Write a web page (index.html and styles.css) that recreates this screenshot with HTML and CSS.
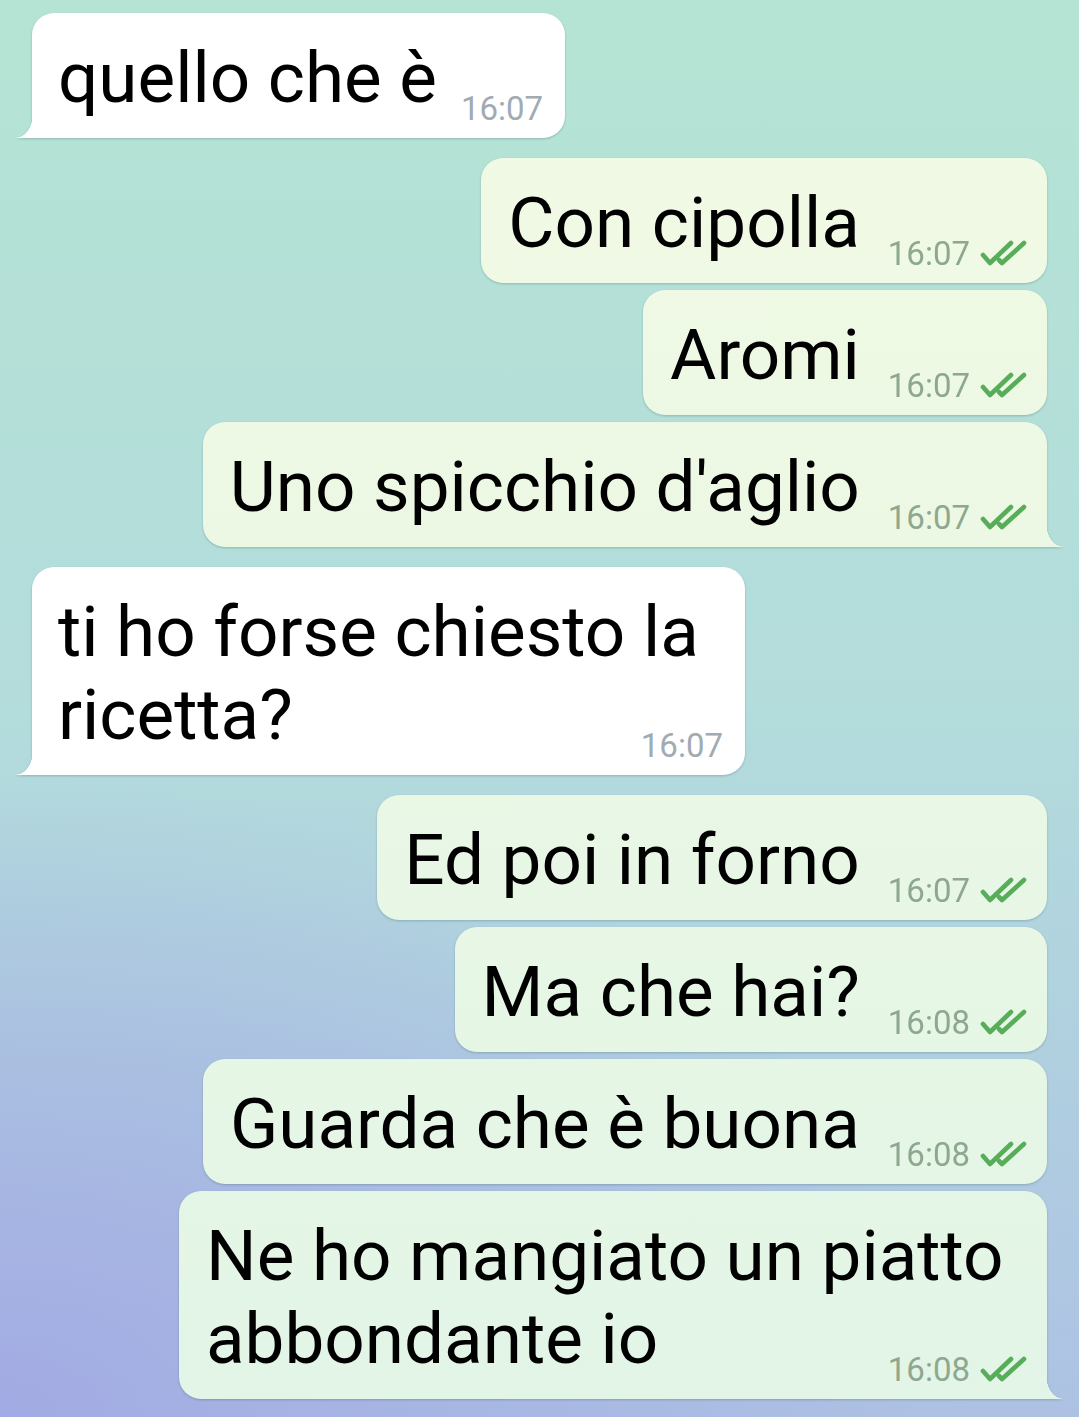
FILE: index.html
```html
<!DOCTYPE html>
<html lang="it">
<head>
    <meta charset="UTF-8">
    <meta name="viewport" content="width=device-width, initial-scale=1.0">
    <title>Chat</title>
    <link rel="stylesheet" href="styles.css">
</head>
<body>
    <div class="chat">
        <div class="row in">
            <p class="bubble tail">quello che è<span class="meta">16:07</span></p>
        </div>

        <div class="row out group">
            <p class="bubble">Con cipolla<span class="meta">16:07<svg class="ticks" viewBox="0 0 48 27"><path d="M3 15 L10 23 L31 3"/><path d="M19 20 L22 23 L44 3"/></svg></span></p>
        </div>
        <div class="row out">
            <p class="bubble">Aromi<span class="meta">16:07<svg class="ticks" viewBox="0 0 48 27"><path d="M3 15 L10 23 L31 3"/><path d="M19 20 L22 23 L44 3"/></svg></span></p>
        </div>
        <div class="row out">
            <p class="bubble tail">Uno spicchio d'aglio<span class="meta">16:07<svg class="ticks" viewBox="0 0 48 27"><path d="M3 15 L10 23 L31 3"/><path d="M19 20 L22 23 L44 3"/></svg></span></p>
        </div>

        <div class="row in group">
            <p class="bubble tail">ti ho forse chiesto la ricetta?<span class="meta">16:07</span></p>
        </div>

        <div class="row out group">
            <p class="bubble">Ed poi in forno<span class="meta">16:07<svg class="ticks" viewBox="0 0 48 27"><path d="M3 15 L10 23 L31 3"/><path d="M19 20 L22 23 L44 3"/></svg></span></p>
        </div>
        <div class="row out">
            <p class="bubble">Ma che hai?<span class="meta">16:08<svg class="ticks" viewBox="0 0 48 27"><path d="M3 15 L10 23 L31 3"/><path d="M19 20 L22 23 L44 3"/></svg></span></p>
        </div>
        <div class="row out">
            <p class="bubble">Guarda che è buona<span class="meta">16:08<svg class="ticks" viewBox="0 0 48 27"><path d="M3 15 L10 23 L31 3"/><path d="M19 20 L22 23 L44 3"/></svg></span></p>
        </div>
        <div class="row out">
            <p class="bubble tail">Ne ho mangiato un piatto abbondante io<span class="meta">16:08<svg class="ticks" viewBox="0 0 48 27"><path d="M3 15 L10 23 L31 3"/><path d="M19 20 L22 23 L44 3"/></svg></span></p>
        </div>
    </div>
</body>
</html>
```

FILE: styles.css
```css
html, body {
    margin: 0;
    padding: 0;
}
body {
    min-height: 100vh;
    font-family: Roboto, "Noto Sans", sans-serif;
    color: #000;
    background:
        radial-gradient(ellipse 90% 45% at 0% 100%, #a2abe3 0%, rgba(162, 171, 227, 0) 100%),
        linear-gradient(180deg, #b5e4d4 0%, #b3dcdc 50%, #adc2e3 100%);
    background-attachment: fixed;
}
.chat {
    display: flex;
    flex-direction: column;
    gap: 7px;
    padding: 13px 32px;
}
.row {
    display: flex;
}
.row.group {
    margin-top: 13px;
}
.row.in {
    justify-content: flex-start;
}
.row.out {
    justify-content: flex-end;
}
.bubble {
    box-sizing: border-box;
    position: relative;
    margin: 0;
    font-size: 71px;
    line-height: 83px;
    border-radius: 22px;
    filter: drop-shadow(0 1px 1px rgba(40, 80, 80, 0.28));
}
.in .bubble {
    max-width: 713px;
    padding: 23px 22px 13px 26px;
    background: #fff;
}
.out .bubble {
    max-width: 868px;
    padding: 23px 19px 13px 27px;
    background: linear-gradient(180deg, #f2fae4 0%, #e2f5e6 100%);
    background-attachment: fixed;
}
.in .bubble.tail {
    border-bottom-left-radius: 0;
}
.out .bubble.tail {
    border-bottom-right-radius: 0;
}
/* coda della nuvoletta */
.bubble.tail::after {
    content: "";
    position: absolute;
    bottom: 0;
    width: 17px;
    height: 24px;
    background: inherit;
}
.in .bubble.tail::after {
    left: -16px;
    -webkit-mask: radial-gradient(ellipse 17px 24px at 0 0, transparent 97%, #000 100%);
    mask: radial-gradient(ellipse 17px 24px at 0 0, transparent 97%, #000 100%);
}
.out .bubble.tail::after {
    right: -16px;
    -webkit-mask: radial-gradient(ellipse 17px 24px at 100% 0, transparent 97%, #000 100%);
    mask: radial-gradient(ellipse 17px 24px at 100% 0, transparent 97%, #000 100%);
}
.meta {
    float: right;
    display: flex;
    align-items: center;
    margin: 56px 0 0 24px;
    font-size: 33px;
    line-height: 33px;
}
.in .meta {
    color: #a0abb4;
}
.out .meta {
    color: #8ea890;
    margin-left: 28px;
}
.ticks {
    width: 48px;
    height: 27px;
    margin-left: 10px;
    fill: none;
    stroke: #58ad5b;
    stroke-width: 4.6;
    stroke-linecap: round;
    stroke-linejoin: round;
}
```
